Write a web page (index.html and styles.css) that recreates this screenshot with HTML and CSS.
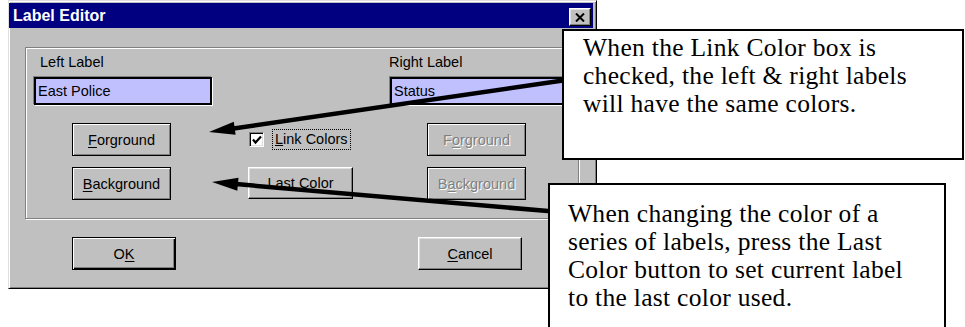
FILE: index.html
```html
<!DOCTYPE html>
<html>
<head>
<meta charset="utf-8">
<title>Label Editor</title>
<link rel="stylesheet" href="styles.css">
</head>
<body>
<div class="page">
  <div class="dialog">
    <div class="titlebar">
      <span class="title">Label Editor</span>
      <span class="close"><svg width="10" height="9" viewBox="0 0 10 9"><path d="M1 0.5 L9 8.5 M9 0.5 L1 8.5" stroke="#000" stroke-width="2" fill="none"/></svg></span>
    </div>
    <div class="body">
      <div class="group">
        <div class="fields">
          <div class="field left">
            <div class="label">Left Label</div>
            <div class="input">East Police</div>
          </div>
          <div class="field right">
            <div class="label">Right Label</div>
            <div class="input">Status</div>
          </div>
        </div>
        <div class="controls">
          <div class="btn framed"><span><u>F</u>orground</span></div>
          <div class="check">
            <span class="box"><svg width="12" height="12" viewBox="0 0 12 12"><path d="M2 5.5 L4.5 8.5 L10 2.5" stroke="#000" stroke-width="2.2" fill="none"/></svg></span>
            <span class="focus"><u>L</u>ink Colors</span>
          </div>
          <div class="btn framed disabled"><span>F<u>o</u>rground</span></div>
          <div class="btn framed"><span><u>B</u>ackground</span></div>
          <div class="btn raised last"><span>Last Color</span></div>
          <div class="btn framed disabled"><span>B<u>a</u>ckground</span></div>
        </div>
      </div>
      <div class="footer">
        <div class="btn default wide"><span>O<u>K</u></span></div>
        <div class="btn raised wide"><span><u>C</u>ancel</span></div>
      </div>
    </div>
  </div>

  <svg class="arrows" width="965" height="327" viewBox="0 0 965 327">
    <line x1="568" y1="79.8" x2="232" y2="128.8" stroke="#000" stroke-width="4.5"/>
    <polygon points="209,132 235.6,134.7 233.8,121.8" fill="#000"/>
    <line x1="554" y1="211.6" x2="236" y2="184.1" stroke="#000" stroke-width="4.5"/>
    <polygon points="212,182 237.3,190.7 238.5,177.8" fill="#000"/>
  </svg>

  <div class="callout c1">When the Link Color box is<br>checked, the left &amp; right labels<br>will have the same colors.</div>
  <div class="callout c2">When changing the color of a<br>series of labels, press the Last<br>Color button to set current label<br>to the last color used.</div>
</div>
</body>
</html>
```

FILE: styles.css
```css
* { box-sizing: border-box; }

html, body {
  margin: 0;
  padding: 0;
  background: #fff;
}

body {
  width: 965px;
  height: 327px;
  overflow: hidden;
  font-family: "Liberation Sans", Arial, sans-serif;
  color: #000;
}

.page {
  position: relative;
  width: 965px;
  height: 327px;
  padding-left: 8px;
}

/* ---------- dialog window ---------- */
.dialog {
  width: 589px;
  height: 289px;
  background: #c0c0c0;
  border: 1px solid;
  border-color: #dfdfdf #000 #000 #dfdfdf;
  box-shadow: inset 1px 1px 0 #fff, inset -1px -1px 0 #808080;
  padding: 2px 3px 2px 0;
  display: flex;
  flex-direction: column;
}

.titlebar {
  height: 25px;
  flex: none;
  background: #000080;
  display: flex;
  justify-content: space-between;
  align-items: flex-start;
  padding: 0 2px 0 4px;
}

.title {
  color: #fff;
  font-weight: bold;
  font-size: 16px;
  line-height: 25px;
}

.close {
  margin-top: 5px;
  width: 22px;
  height: 18px;
  background: #c0c0c0;
  border: 1px solid;
  border-color: #fff #000 #000 #fff;
  box-shadow: inset -1px -1px 0 #808080, inset 1px 1px 0 #dfdfdf;
  display: flex;
  align-items: center;
  justify-content: center;
}

.close svg { display: block; }

.body {
  flex: 1;
  padding: 19px 14px 0 16px;
}

/* ---------- group box ---------- */
.group {
  border: 1px solid #808080;
  box-shadow: inset 1px 1px 0 #fff, 1px 1px 0 #fff;
  padding: 6px 10px 18px 8px;
}

.fields {
  display: flex;
  justify-content: space-between;
}

.field { width: 178px; }

.label {
  font-size: 14.5px;
  line-height: 17px;
  height: 17px;
}

.field.left .label { padding-left: 6px; }
.field.right .label { margin-left: -1px; }

.input {
  margin-top: 6px;
  height: 28px;
  background: #c0c0ff;
  border: 2px solid #000;
  box-shadow: -1px -1px 0 #808080, 1px 1px 0 #fff;
  font-size: 14.5px;
  line-height: 24px;
  padding-left: 2px;
}

.controls {
  margin-top: 18px;
  padding-left: 38px;
  display: grid;
  grid-template-columns: 176px 179px 99px;
  grid-template-rows: 33px 33px;
  row-gap: 11px;
}

/* ---------- buttons ---------- */
.btn {
  width: 99px;
  height: 33px;
  background: #c0c0c0;
  display: flex;
  align-items: center;
  justify-content: center;
  font-size: 14.5px;
}

.btn u { text-underline-offset: 2px; }

.btn.framed {
  border: 1px solid #000;
  box-shadow: inset 1px 1px 0 #fff, inset -1px -1px 0 #808080;
}

.btn.raised {
  border: 1px solid;
  border-color: #fff #000 #000 #fff;
  box-shadow: inset -1px -1px 0 #808080, inset 1px 1px 0 #dfdfdf;
}

.btn.default {
  border: 1px solid #000;
  box-shadow: inset 1px 1px 0 #fff, inset -1px -1px 0 #000, inset -2px -2px 0 #808080;
}

.btn.last {
  width: 105px;
  height: 32px;
}

.btn.wide { width: 104px; }

.btn.disabled {
  color: #808080;
  text-shadow: 1px 1px 0 #fff;
}

/* ---------- checkbox ---------- */
.check {
  display: flex;
  align-items: center;
}

.box {
  margin-left: 1px;
  width: 15px;
  height: 15px;
  background: #fff;
  border: 1px solid;
  border-color: #808080 #fff #fff #808080;
  box-shadow: inset 1px 1px 0 #000, inset -1px -1px 0 #dfdfdf;
  display: flex;
  align-items: center;
  justify-content: center;
}

.box svg { display: block; }

.focus {
  margin-left: 8px;
  border: 1px dotted #000;
  padding: 0 2px;
  height: 21px;
  line-height: 19px;
  font-size: 14.5px;
}

.footer {
  display: flex;
  gap: 242px;
  padding: 18px 0 0 47px;
}

/* ---------- annotations ---------- */
.arrows {
  position: absolute;
  left: 0;
  top: 0;
}

.callout {
  position: absolute;
  background: #fff;
  border: 2px solid #000;
  font-family: "Liberation Serif", "Times New Roman", serif;
  font-size: 25.5px;
  letter-spacing: 0.3px;
  line-height: 28px;
  color: #000;
  white-space: nowrap;
}

.c1 {
  left: 562px;
  top: 29px;
  width: 402px;
  height: 131px;
  padding: 3px 0 0 19px;
}

.c2 {
  left: 548px;
  top: 183px;
  width: 398px;
  height: 160px;
  padding: 15px 0 0 18px;
}
```
